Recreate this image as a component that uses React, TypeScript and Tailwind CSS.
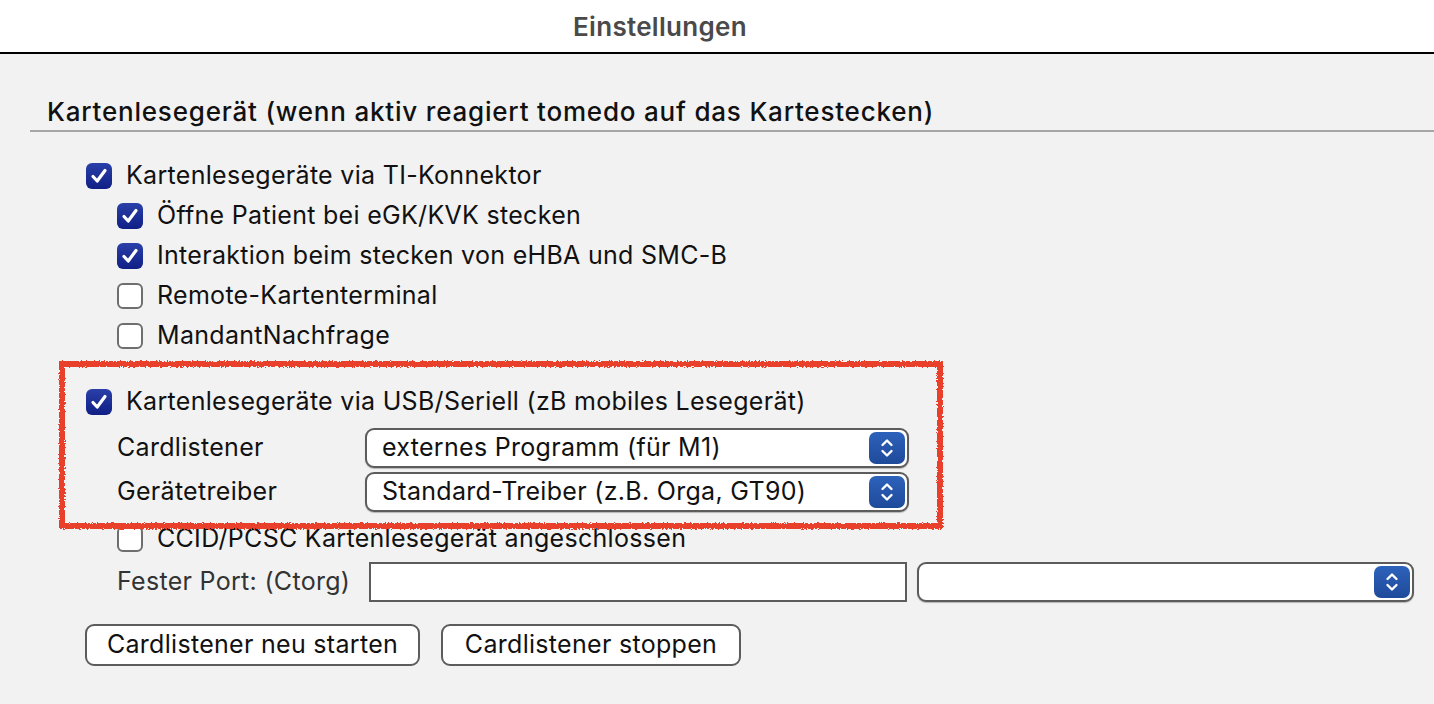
import React from 'react';

const font = { fontFamily: 'Inter, "Noto Sans", sans-serif' };

function CheckBox({ checked }: { checked: boolean }) {
  if (checked) {
    return (
      <div className="w-[26px] h-[26px] shrink-0 rounded-[6px] bg-gradient-to-b from-[#2a3fa8] to-[#101f86] flex items-center justify-center">
        <svg width="20" height="20" viewBox="0 0 20 20" fill="none">
          <path d="M4 10.5 L8.2 15 L16 4.5" stroke="white" strokeWidth="3.2" strokeLinecap="round" strokeLinejoin="round" />
        </svg>
      </div>
    );
  }
  return <div className="w-[26px] h-[26px] shrink-0 rounded-[6px] bg-white border-2 border-[#6e6e6e]" />;
}

function CheckRow({ checked, label, indent }: { checked: boolean; label: string; indent: boolean }) {
  return (
    <div className={`h-10 flex items-center gap-[14px] ${indent ? 'pl-[117px]' : 'pl-[86px]'}`}>
      <CheckBox checked={checked} />
      <span className="text-[25px] tracking-[0.3px] text-[#111]">{label}</span>
    </div>
  );
}

function Stepper() {
  return (
    <div className="w-[36px] h-[32px] rounded-[7px] bg-gradient-to-b from-[#2d62bb] to-[#1f4a9a] flex items-center justify-center">
      <svg width="16" height="24" viewBox="0 0 16 24" fill="none">
        <path d="M3.5 9 L8 4.5 L12.5 9" stroke="white" strokeWidth="2.4" strokeLinecap="round" strokeLinejoin="round" />
        <path d="M3.5 15 L8 19.5 L12.5 15" stroke="white" strokeWidth="2.4" strokeLinecap="round" strokeLinejoin="round" />
      </svg>
    </div>
  );
}

function Select({ value, width }: { value: string; width: string }) {
  return (
    <div className={`${width} h-[40px] rounded-[9px] border-2 border-[#5c5c5c] bg-white flex items-center justify-between pl-[15px] pr-[2px] shadow-[0_1px_1px_rgba(0,0,0,0.25)]`}>
      <span className="text-[25px] tracking-[0.3px] text-[#111] whitespace-nowrap">{value}</span>
      <Stepper />
    </div>
  );
}

function Button({ label, width }: { label: string; width: string }) {
  return (
    <div className={`${width} h-[42px] rounded-[9px] border-2 border-[#5c5c5c] bg-white flex items-center justify-center text-[25px] tracking-[0.3px] text-[#111]`}>
      {label}
    </div>
  );
}

export default function App() {
  return (
    <div className="w-[1434px] h-[704px] bg-[#f2f2f2] overflow-hidden relative" style={font}>
      {/* Title bar */}
      <header className="h-[54px] bg-white border-b-2 border-black flex items-center justify-center">
        <span className="text-[26px] font-semibold tracking-[0.3px] text-[#4a4a4a] -ml-[114px]">Einstellungen</span>
      </header>

      {/* Section heading */}
      <div className="mt-[42px] ml-[30px] pl-[17px] pb-[2px] border-b-2 border-[#a6a6a6]">
        <h2 className="text-[26px] leading-[32px] font-medium tracking-[0.8px] text-[#111]">
          Kartenlesegerät (wenn aktiv reagiert tomedo auf das Kartestecken)
        </h2>
      </div>

      <div className="mt-[24px] flex flex-col">
        <CheckRow checked label="Kartenlesegeräte via TI-Konnektor" indent={false} />
        <CheckRow checked label="Öffne Patient bei eGK/KVK stecken" indent />
        <CheckRow checked label="Interaktion beim stecken von eHBA und SMC-B" indent />
        <CheckRow checked={false} label="Remote-Kartenterminal" indent />
        <CheckRow checked={false} label="MandantNachfrage" indent />

        <div className="mt-[26px]">
          <CheckRow checked label="Kartenlesegeräte via USB/Seriell (zB mobiles Lesegerät)" indent={false} />
        </div>

        <div className="mt-[4px] h-[44px] flex items-center pl-[117px]">
          <span className="w-[248px] text-[25px] tracking-[0.3px] text-[#111]">Cardlistener</span>
          <Select value="externes Programm (für M1)" width="w-[544px]" />
        </div>
        <div className="h-[44px] flex items-center pl-[117px]">
          <span className="w-[248px] text-[25px] tracking-[0.3px] text-[#111]">Gerätetreiber</span>
          <Select value="Standard-Treiber (z.B. Orga, GT90)" width="w-[544px]" />
        </div>

        <div className="mt-[5px]">
          <CheckRow checked={false} label="CCID/PCSC Kartenlesegerät angeschlossen" indent />
        </div>

        <div className="h-[46px] flex items-center pl-[117px]">
          <span className="w-[252px] text-[25px] tracking-[0.3px] text-[#333]">Fester Port: (Ctorg)</span>
          <div className="w-[538px] h-[40px] bg-white border-2 border-[#5c5c5c]" />
          <div className="ml-[10px]">
            <Select value="" width="w-[497px]" />
          </div>
        </div>

        <div className="mt-[19px] flex gap-[21px] pl-[85px]">
          <Button label="Cardlistener neu starten" width="w-[335px]" />
          <Button label="Cardlistener stoppen" width="w-[300px]" />
        </div>
      </div>

      {/* Red annotation frame, roughened like a marker stroke */}
      <svg width="0" height="0" className="absolute">
        <filter id="rough">
          <feTurbulence type="fractalNoise" baseFrequency="0.6" numOctaves="2" seed="3" />
          <feDisplacementMap in="SourceGraphic" scale="4" />
        </filter>
      </svg>
      <div className="absolute left-[59px] top-[361px] w-[884px] h-[168px] border-[6px] border-[#e8402a] pointer-events-none [filter:url(#rough)]" />
    </div>
  );
}
